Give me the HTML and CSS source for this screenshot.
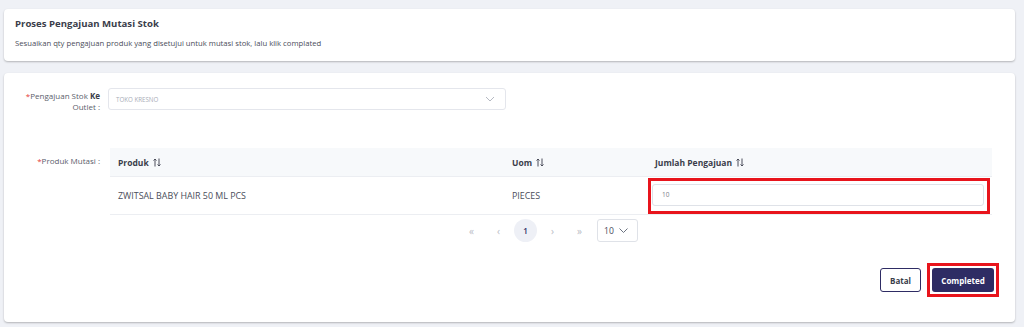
FILE: index.html
```html
<html>
<head>
    <link rel="stylesheet" href="styles.css">
</head>
<body>
    <div class="page">
        <div class="card head-card">
            <div class="title">Proses Pengajuan Mutasi Stok</div>
            <div class="subtitle">Sesuaikan qty pengajuan produk yang disetujui untuk mutasi stok, lalu klik complated</div>
        </div>

        <div class="card form-card">
            <div class="form-row outlet-row">
                <div class="label"><span class="req">*</span>Pengajuan Stok <b>Ke</b><br>Outlet :</div>
                <div class="select">
                    <span>TOKO KRESNO</span>
                    <svg width="10" height="6" viewBox="0 0 10 6"><path d="M1 1l4 4 4-4" fill="none" stroke="#b5b9c2" stroke-width="1"/></svg>
                </div>
            </div>

            <div class="form-row product-row">
                <div class="label"><span class="req">*</span>Produk Mutasi :</div>
                <div class="table-wrap">
                    <div class="table">
                        <div class="thead">
                            <div class="col c1">Produk <svg class="sort" width="8" height="9" viewBox="0 0 8 9"><path d="M2 8.5V1M0.5 2.5L2 1l1.5 1.5M6 0.5V8M4.5 6.5L6 8l1.5-1.5" fill="none" stroke="#4a4d5a" stroke-width="1"/></svg></div>
                            <div class="col c2">Uom <svg class="sort" width="8" height="9" viewBox="0 0 8 9"><path d="M2 8.5V1M0.5 2.5L2 1l1.5 1.5M6 0.5V8M4.5 6.5L6 8l1.5-1.5" fill="none" stroke="#4a4d5a" stroke-width="1"/></svg></div>
                            <div class="col c3">Jumlah Pengajuan <svg class="sort" width="8" height="9" viewBox="0 0 8 9"><path d="M2 8.5V1M0.5 2.5L2 1l1.5 1.5M6 0.5V8M4.5 6.5L6 8l1.5-1.5" fill="none" stroke="#4a4d5a" stroke-width="1"/></svg></div>
                        </div>
                        <div class="trow">
                            <div class="col c1">ZWITSAL BABY HAIR 50 ML PCS</div>
                            <div class="col c2">PIECES</div>
                            <div class="col c3 qty-cell">
                                <div class="highlight">
                                    <div class="qty-input">10</div>
                                </div>
                            </div>
                        </div>
                    </div>
                    <div class="pager">
                        <span class="pg">«</span>
                        <span class="pg">‹</span>
                        <span class="pg current">1</span>
                        <span class="pg">›</span>
                        <span class="pg">»</span>
                        <div class="per-page">
                            <span>10</span>
                            <svg width="9" height="5" viewBox="0 0 9 5"><path d="M0.5 0.5l4 4 4-4" fill="none" stroke="#6b7280" stroke-width="1"/></svg>
                        </div>
                    </div>
                </div>
            </div>

            <div class="actions">
                <button class="btn btn-outline">Batal</button>
                <div class="highlight btn-highlight">
                    <button class="btn btn-primary">Completed</button>
                </div>
            </div>
        </div>
    </div>
</body>
</html>
```

FILE: styles.css
```css
body {
    margin: 0;
    font-family: "Open Sans", "Noto Sans", sans-serif;
    background-color: #eff1f6;
    color: #3f4254;
}

.page {
    padding: 9px 9px 0 4px;
    display: flex;
    flex-direction: column;
    gap: 12px;
}

.card {
    background-color: #ffffff;
    border-radius: 4px;
    box-shadow: 0 1px 2px rgba(0, 0, 0, 0.25);
}

.head-card {
    height: 52px;
    padding: 0 11px;
    box-sizing: border-box;
}

.title {
    padding-top: 8px;
    font-size: 9.6px;
    font-weight: 700;
    color: #3a3d4a;
}

.subtitle {
    margin-top: 8px;
    font-size: 7.7px;
    color: #4a4d5a;
}

.form-card {
    height: 249px;
    box-sizing: border-box;
    padding-top: 15px;
}

.form-row {
    display: flex;
    align-items: flex-start;
}

.label {
    width: 97px;
    text-align: right;
    font-size: 8px;
    line-height: 11px;
    color: #5b5e6b;
    padding-right: 1px;
    box-sizing: border-box;
}

.label b {
    color: #3a3d4a;
}

.req {
    color: #e53935;
}

.outlet-row .label {
    padding-top: 2px;
}

.select {
    margin-left: 7px;
    width: 398px;
    height: 22px;
    box-sizing: border-box;
    border: 1px solid #e4e6ec;
    border-radius: 3px;
    display: flex;
    align-items: center;
    justify-content: space-between;
    padding: 0 10px 0 7px;
    font-size: 6.2px;
    color: #a9adb7;
}

.product-row {
    margin-top: 36px;
}

.product-row .label {
    padding-top: 7px;
}

.table-wrap {
    margin-left: 9px;
    width: 882px;
}

.thead,
.trow {
    display: flex;
    align-items: center;
}

.thead {
    height: 28px;
    background-color: #f7f9fb;
    border-bottom: 1px solid #eceef2;
    font-size: 8.5px;
    font-weight: 700;
    color: #3a3d4a;
}

.trow {
    height: 37px;
    border-bottom: 1px solid #eceef2;
    font-size: 8.9px;
    color: #4a4d5a;
}

.col {
    box-sizing: border-box;
}

.col.c1 {
    width: 394px;
    padding-left: 8px;
}

.col.c2 {
    width: 144px;
    padding-left: 8px;
}

.col.c3 {
    flex: 1;
    padding-left: 7px;
}

.sort {
    margin-left: 2px;
    vertical-align: -1px;
}

.qty-cell {
    padding-left: 0 !important;
    padding-right: 2px;
}

.highlight {
    border: 3px solid #e8141c;
    padding: 3px;
}

.qty-cell .highlight {
    height: 36px;
    box-sizing: border-box;
    padding: 3px 3px 5px 1px;
}

.qty-input {
    height: 100%;
    box-sizing: border-box;
    border: 1px solid #dfe2e8;
    border-radius: 3px;
    font-size: 6.5px;
    color: #7b7f8a;
    display: flex;
    align-items: center;
    padding-left: 9px;
}

.pager {
    display: flex;
    align-items: center;
    gap: 4px;
    margin-top: 4px;
    padding-left: 350px;
    font-size: 10px;
    color: #b9bcc5;
}

.pg {
    width: 23px;
    height: 23px;
    border-radius: 50%;
    display: flex;
    align-items: center;
    justify-content: center;
}

.pg.current {
    background-color: #eef0f6;
    color: #2f2d63;
    font-size: 8px;
    font-weight: 600;
}

.per-page {
    margin-left: 2px;
    width: 41px;
    height: 23px;
    box-sizing: border-box;
    border: 1px solid #dfe2e8;
    border-radius: 3px;
    display: flex;
    align-items: center;
    justify-content: space-between;
    padding: 0 9px 0 6px;
    color: #4a4d5a;
    font-size: 8.6px;
}

.actions {
    display: flex;
    justify-content: flex-end;
    align-items: center;
    gap: 6px;
    margin-top: 21px;
    padding-right: 16px;
}

.btn {
    height: 24px;
    border-radius: 3px;
    font-family: "Open Sans", "Noto Sans", sans-serif;
    font-size: 8px;
    font-weight: 700;
    cursor: pointer;
}

.btn-outline {
    width: 41px;
    background-color: #ffffff;
    border: 1px solid #2e2c64;
    color: #3a3d4a;
}

.btn-primary {
    width: 62px;
    background-color: #2e2c64;
    border: none;
    color: #ffffff;
}

.btn-highlight {
    padding: 2px;
    display: flex;
}
```
